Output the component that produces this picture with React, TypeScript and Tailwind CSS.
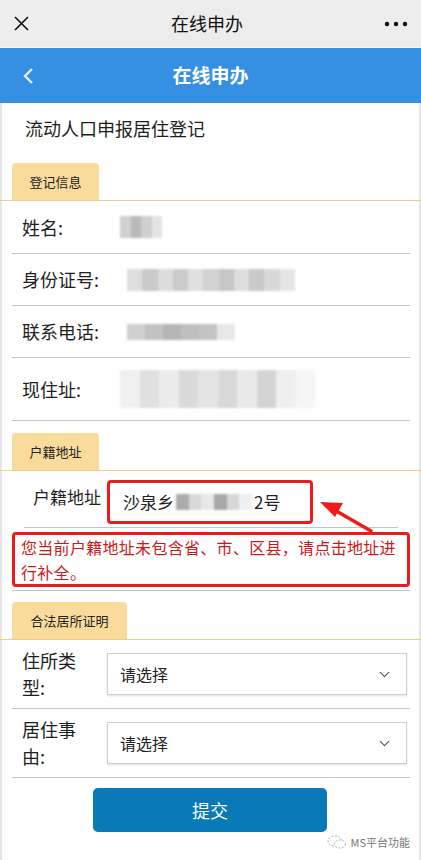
import { ChevronDown } from "lucide-react";

// 打码块：几格深浅不一的灰色，再整体模糊一下
function Mosaic({ shades, w, h }: { shades: string[]; w: number; h: number }) {
  return (
    <div className="flex blur-[1.2px]" style={{ width: w, height: h }}>
      {shades.map((c, i) => (
        <div key={i} className="flex-1" style={{ backgroundColor: c }} />
      ))}
    </div>
  );
}

function Tab({ text, w }: { text: string; w: string }) {
  return (
    <div className="border-b border-[#efcd86] -mx-[12px] px-[12px]">
      <div
        className={`${w} h-[37px] bg-[#f9dc9c] rounded-t-[4px] flex items-center justify-center text-[13px] text-[#222]`}
      >
        {text}
      </div>
    </div>
  );
}

function Row({
  label,
  h,
  children,
}: {
  label: string;
  h: string;
  children?: React.ReactNode;
}) {
  return (
    <div className={`${h} border-b border-[#c4c4c4] flex items-center`}>
      <div className="w-[105px] pl-[10px] text-[18px] text-[#1e1e1e]">{label}</div>
      {children}
    </div>
  );
}

function SelectRow({ l1, l2, h }: { l1: string; l2: string; h: string }) {
  return (
    <div className={`${h} border-b border-[#c4c4c4] flex items-center`}>
      <div className="w-[95px] pl-[10px] text-[18px] leading-[27px] text-[#1e1e1e]">
        <div>{l1}</div>
        <div>{l2}</div>
      </div>
      <div className="w-[300px] h-[42px] border border-[#cfcfcf] shadow-[0_1px_2px_rgba(0,0,0,0.12)] bg-white flex items-center justify-between pl-[12px] pr-[13px] text-[16px] text-[#222]">
        <span>请选择</span>
        <ChevronDown size={17} strokeWidth={1.6} className="text-[#555]" />
      </div>
    </div>
  );
}

export default function App() {
  return (
    <div className="relative w-[421px] h-[860px] overflow-hidden bg-white font-['Noto_Sans_CJK_SC','Noto_Sans',sans-serif]">
      {/* 微信顶栏 */}
      <div className="h-[48px] bg-[#ededed] border-b border-[#f6f6f6] flex items-center justify-between px-[13px]">
        <svg width="17" height="17" viewBox="0 0 17 17">
          <path d="M2 2L15 15M15 2L2 15" stroke="#111" strokeWidth="1.6" />
        </svg>
        <span className="text-[18px] text-[#111]">在线申办</span>
        <svg width="24" height="6" viewBox="0 0 24 6">
          <circle cx="3" cy="3" r="2.2" fill="#111" />
          <circle cx="12" cy="3" r="2.2" fill="#111" />
          <circle cx="21" cy="3" r="2.2" fill="#111" />
        </svg>
      </div>

      {/* 蓝色标题栏 */}
      <div className="h-[55px] bg-[#3590e4] flex items-center px-[22px]">
        <svg width="14" height="18" viewBox="0 0 14 18">
          <path d="M10 2L3 9L10 16" fill="none" stroke="#e3f0ff" strokeWidth="2.4" />
        </svg>
        <span className="flex-1 text-center pr-[14px] text-[19px] font-bold text-white">在线申办</span>
      </div>

      <div className="border-x-2 border-[#e6e6e6] px-[10px] pr-[9px] h-[757px]">
        <div className="h-[50px] flex items-center pl-[13px] text-[18px] text-[#1e1e1e]">
          流动人口申报居住登记
        </div>

        <div className="mt-[10px]">
          <Tab text="登记信息" w="w-[87px]" />
        </div>
        <Row label="姓名:" h="h-[53px]">
          <div className="ml-[3px]">
            <Mosaic w={42} h={22} shades={["#d0d0d0", "#b9b9b9", "#cfcfcf", "#e4e4e4"]} />
          </div>
        </Row>
        <Row label="身份证号:" h="h-[52px]">
          <div className="ml-[10px]">
            <Mosaic
              w={168}
              h={22}
              shades={["#dedede", "#cacaca", "#dcdcdc", "#cbcbcb", "#e0e0e0", "#d2d2d2", "#c6c6c6", "#dddddd", "#c9c9c9", "#d8d8d8", "#e6e6e6"]}
            />
          </div>
        </Row>
        <Row label="联系电话:" h="h-[52px]">
          <div className="ml-[10px]">
            <Mosaic w={108} h={16} shades={["#cfcfcf", "#c2c2c2", "#b5b5b5", "#bfbfbf", "#c4c4c4", "#e7e7e7"]} />
          </div>
        </Row>
        <Row label="现住址:" h="h-[63px]">
          <div className="ml-[3px]">
            <Mosaic
              w={195}
              h={38}
              shades={["#f0f0f0", "#e0e0e0", "#ececec", "#dadada", "#e4e4e4", "#d8d8d8", "#e9e9e9", "#d4d4d4", "#efefef", "#f6f6f6"]}
            />
          </div>
        </Row>

        <div className="mt-[12px]">
          <Tab text="户籍地址" w="w-[87px]" />
        </div>
        <div className="h-[57px] flex items-start pt-[9px] mx-[12px] border-b border-[#c4c4c4]">
          <div className="w-[83px] pl-[9px] text-[17px] text-[#1e1e1e] pt-[4px]">户籍地址</div>
          <div className="w-[206px] h-[44px] border-[3px] border-[#ee1b1b] rounded-[4px] flex items-center pl-[13px] text-[17px] text-[#222]">
            <span>沙泉乡</span>
            <div className="mx-[2px]">
              <Mosaic w={76} h={16} shades={["#ababab", "#d8d8d8", "#e8e8e8", "#a8a8a8", "#d6d6d6", "#f0f0f0"]} />
            </div>
            <span>2号</span>
          </div>
        </div>
        <div className="border-b border-[#c4c4c4] pb-[3px] pt-[4px]">
          <div className="h-[55px] border-[3px] border-[#ee1b1b] rounded-[4px] px-[6px] text-[16px] leading-[25px] text-[#cc1a1a] tracking-[0.3px]">
            您当前户籍地址未包含省、市、区县，请点击地址进行补全。
          </div>
        </div>

        <div className="mt-[11px]">
          <Tab text="合法居所证明" w="w-[115px]" />
        </div>
        <SelectRow l1="住所类" l2="型:" h="h-[69px]" />
        <SelectRow l1="居住事" l2="由:" h="h-[69px]" />

        <div className="flex justify-center pt-[10px]">
          <button className="w-[234px] h-[44px] rounded-[5px] bg-[#0a79b8] text-white text-[18px] -ml-[2px]">
            提交
          </button>
        </div>
        <div className="flex justify-end items-center gap-[4px] mt-[2px] text-[11px] text-[#777]">
          <svg width="20" height="14" viewBox="0 0 20 14">
            <ellipse cx="8" cy="6" rx="7" ry="5" fill="none" stroke="#aaa" strokeWidth="1" strokeDasharray="2 1.5" />
            <ellipse cx="13" cy="9" rx="5.5" ry="4" fill="white" stroke="#aaa" strokeWidth="1" strokeDasharray="2 1.5" />
          </svg>
          <span>MS平台功能</span>
        </div>
      </div>

      {/* 标注箭头 */}
      <svg className="absolute left-0 top-0 pointer-events-none" width="421" height="860" viewBox="0 0 421 860">
        <path d="M371 531 L338 512" stroke="#ee1b1b" strokeWidth="3.5" strokeLinecap="round" />
        <path d="M320 502 L343 503 L335 517 Z" fill="#ee1b1b" />
      </svg>
    </div>
  );
}
